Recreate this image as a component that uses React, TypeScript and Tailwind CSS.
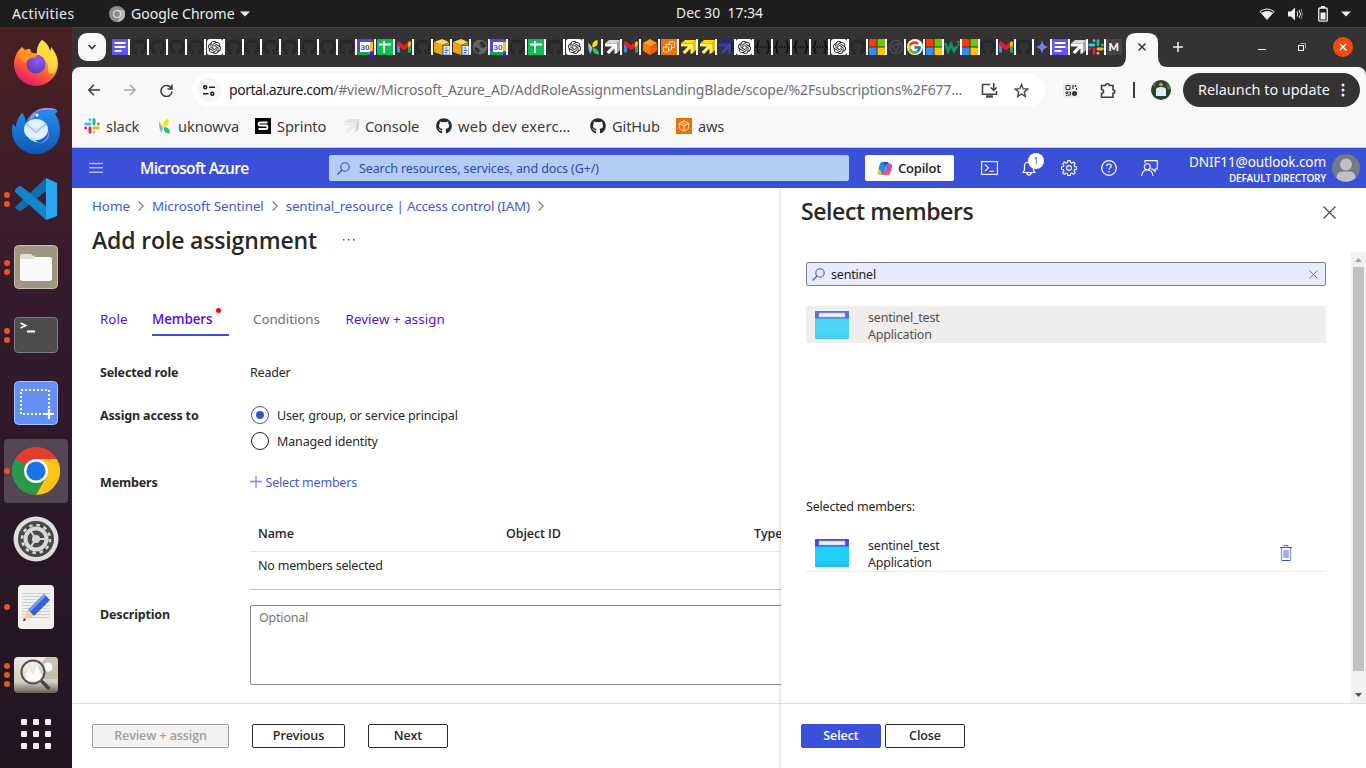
import React from "react";
import { FaGithub } from "react-icons/fa";
import { SiOpenai } from "react-icons/si";
import { FcGoogle } from "react-icons/fc";

const uiFont = "font-['Noto_Sans',sans-serif]";

/* ---------- Favicons ---------- */

const Docs = () => (
  <svg width="16" height="16" viewBox="0 0 16 16">
    <rect width="16" height="16" fill="#6253f5" />
    <path d="M2.5 4h11M2.5 8h11M2.5 12h7" stroke="#fff" strokeWidth="1.8" />
  </svg>
);
const GithubDark = () => <FaGithub size={16} color="#24292f" />;
const OpenAI = () => (
  <span className="flex size-4 items-center justify-center rounded-[3px] bg-white">
    <SiOpenai size={13} color="#111" />
  </span>
);
const Calendar = () => (
  <svg width="17" height="18" viewBox="0 0 17 18" className="mt-[2px] shrink-0">
    <path d="M0 2a2 2 0 0 1 2-2h12a2 2 0 0 1 2 2v2H0z" fill="#4b49e8" />
    <path d="M0 3h3v10H0z" fill="#4b49e8" />
    <path d="M13 3h3v9h-3z" fill="#ffc107" />
    <path d="M0 12.500h13V16H2a2 2 0 0 1-2-2z" fill="#12a84c" />
    <path d="M13 12h3v3h-3z" fill="#4b49e8" />
    <rect x="3" y="3" width="10" height="10" fill="#fff" />
    <text x="8" y="11" textAnchor="middle" fontSize="8" fontWeight="700" fontFamily="Roboto, sans-serif" fill="#3c5fe0">30</text>
    <circle cx="15" cy="16" r="2.200" fill="#4b0fe0" />
  </svg>
);
const Sheets = () => (
  <svg width="16" height="16" viewBox="0 0 16 16">
    <rect width="16" height="16" rx="1" fill="#0bbf57" />
    <path d="M2 5.500h12M7 2v12" stroke="#fff" strokeWidth="1.800" />
  </svg>
);
const Gmail = () => (
  <svg width="16" height="16" viewBox="0 0 16 16">
    <path d="M1 4v8.500a1 1 0 0 0 1 1h2V7z" fill="#4285f4" />
    <path d="M15 4v8.500a1 1 0 0 1-1 1h-2V7z" fill="#34a853" />
    <path d="M1 3.500C1 2.200 2.500 2 3.500 2.800L8 6.200l4.500-3.400C13.500 2 15 2.200 15 3.500L12 8.300 8 11.300l-4-3L1 5.500z" fill="#ea1c24" />
    <path d="M12 4.200V8.300l3-2.300V4c0-1.600-1.600-1.900-2.500-1.200z" fill="#fbbc04" />
  </svg>
);
const YellowBox = () => (
  <svg width="16" height="16" viewBox="0 0 16 16">
    <path d="M0 3 8 0l7 3-7 3z" fill="#ffd766" />
    <path d="M0 3l8 3v10l-8-3z" fill="#f0a30a" />
    <path d="M8 6l7-3v9l-7 4z" fill="#d98a00" />
    <rect x="9" y="6.500" width="7" height="9.500" fill="#fff" stroke="#2766b8" />
    <path d="M10.500 9h3M10.500 11.300h4M10.500 13.600h3" stroke="#2766b8" strokeWidth="1.200" />
  </svg>
);
const Globe = () => (
  <svg width="16" height="16" viewBox="0 0 16 16">
    <circle cx="8" cy="8" r="7.300" fill="#62666b" />
    <path d="M9 2c3 .5 5 3 5 6l-3 1-3-1 1-2-2-1zM2 8l4 1 2 2-1 3c-3 0-5-3-5-6z" fill="#343232" />
  </svg>
);
const Uknowva = () => (
  <svg width="16" height="16" viewBox="0 0 16 16">
    <path d="M7.500 8.500C6.500 4 9 1.500 12.500 1c.8 4.500-1 7-5 7.500z" fill="#f4e400" />
    <path d="M8 9c3 0 6 2 6 6.500-4 0-7-2-6-6.500z" fill="#18c77c" />
    <path d="M3.500 3C4 6 6.500 7 7 9s-1 4-1.500 6C3.500 12 2.500 7 3.500 3z" fill="#8ea2f7" />
    <path d="M4 4.500c2 2.500 4 3.500 3 7-1-3-3-4-3-7z" fill="#f4e400" />
  </svg>
);
const Arrow = ({ light, mid, dark }: { light: string; mid: string; dark: string }) => (
  <svg width="16" height="16" viewBox="0 0 16 16">
    <path d="M5 1h11l-3 3.500H1z" fill={mid} />
    <path d="M16 1v10l-3 3V4.500z" fill={dark} />
    <path d="M1 4.500h12V14l-2.500 1V9.500L5 15l-2.500-2L8 7.500H1z" fill={light} />
  </svg>
);
const Cube = () => (
  <svg width="16" height="16" viewBox="0 0 16 16">
    <path d="M1 4 8 0l7 4-7 4z" fill="#ff9d1c" />
    <path d="M1 4l7 4v8l-7-4z" fill="#ff7a00" />
    <path d="M15 4 8 8v8l7-4z" fill="#e86100" />
  </svg>
);
const AwsTile = () => (
  <svg width="16" height="16" viewBox="0 0 16 16">
    <rect width="16" height="16" fill="#e8780c" />
    <g fill="none" stroke="#ffe5c7">
      <rect x="2.500" y="8" width="5" height="5" rx="1" />
      <path d="M5 8V6.500a1 1 0 0 1 1-1h3.500a1 1 0 0 1 1 1V10a1 1 0 0 1-1 1H7.500M8 5.500V4a1 1 0 0 1 1-1h3.500a1 1 0 0 1 1 1v3.500a1 1 0 0 1-1 1h-2" />
    </g>
  </svg>
);
const Braces = () => (
  <svg width="16" height="16" viewBox="0 0 16 16" fill="none" stroke="#0d0d0d" strokeWidth="1.500">
    <path d="M4.500 2C2.500 2 2.700 3 2.700 5S2.200 8 .5 8c1.700 0 2.200 1 2.200 3s-.2 3 1.800 3M11.500 2c2 0 1.800 1 1.800 3s.5 3 2.200 3c-1.700 0-2.200 1-2.200 3s.2 3-1.800 3" />
    <path d="M4.500 8h7" strokeDasharray="1.500 1.200" />
  </svg>
);
const Windows = () => (
  <svg width="16" height="16" viewBox="0 0 16 16">
    <path d="M0 0h7.500v7.500H0z" fill="#ff3c00" />
    <path d="M8.500 0H16v7.500H8.500z" fill="#66cc00" />
    <path d="M0 8.500h7.500V16H0z" fill="#2e8ff5" />
    <path d="M8.500 8.500H16V16H8.500z" fill="#ffc400" />
  </svg>
);
const ChromeDark = () => (
  <svg width="16" height="16" viewBox="0 0 16 16" fill="none" stroke="#474a4e">
    <circle cx="8" cy="8" r="6.500" strokeWidth="1.600" />
    <circle cx="8" cy="8" r="2.700" strokeWidth="1.500" />
    <path d="M8 5.200h6M5.600 9.300l-3-5M10.400 9.300l-3 5" strokeWidth="1.400" />
  </svg>
);
const Google = () => (
  <span className="flex size-4 items-center justify-center rounded-full bg-white">
    <FcGoogle size={15} />
  </span>
);
const W3 = () => (
  <svg width="16" height="16" viewBox="0 0 16 16" fill="none" stroke="#059862">
    <path d="M1 4l3 8 3-7 3 7 3-5" strokeWidth="2.800" />
    <path d="M12.500 2.500h3l-1.500 2c1.500 0 2 2.500-.5 2.500" strokeWidth="1.100" />
  </svg>
);
const Gemini = () => (
  <svg width="16" height="16" viewBox="0 0 16 16">
    <defs>
      <linearGradient id="gem" x1="0" x2="1">
        <stop offset="0" stopColor="#3f8cf0" />
        <stop offset="1" stopColor="#a27ae0" />
      </linearGradient>
    </defs>
    <path d="M8 1c.7 4.400 2.600 6.300 7 7-4.400.7-6.300 2.600-7 7-.7-4.400-2.600-6.300-7-7 4.400-.7 6.300-2.600 7-7z" fill="url(#gem)" />
  </svg>
);
const Slack = () => (
  <svg width="16" height="16" viewBox="0 0 16 16" strokeWidth="2.900" strokeLinecap="round" fill="none">
    <path d="M6 1.700h.01M1.700 6H6" stroke="#36c5f0" />
    <path d="M10 1.700V6M14.300 6h.01" stroke="#2eb67d" />
    <path d="M10 10h4.300M10 14.300h.01" stroke="#ecb22e" />
    <path d="M6 10v4.300M1.700 10h.01" stroke="#e01e5a" />
  </svg>
);
const Medium = () => (
  <span className="flex size-4 items-center justify-center bg-[#454545] font-['Lato',sans-serif] text-[11px] font-black text-white">M</span>
);

const WhiteArrow = () => <Arrow light="#fafafa" mid="#d8d8d8" dark="#a9a9a9" />;
const YellowArrow = () => <Arrow light="#fff06a" mid="#ffdf00" dark="#e8c500" />;
const NavyArrow = () => <Arrow light="#3a4599" mid="#23277a" dark="#1b1d5e" />;

const wideTabs = [
  Docs, GithubDark, GithubDark, GithubDark, GithubDark, OpenAI, GithubDark, GithubDark, GithubDark, GithubDark,
  GithubDark, GithubDark, GithubDark, Calendar, Sheets, Gmail, GithubDark, YellowBox, YellowBox, Globe, Calendar,
  GithubDark, Sheets, GithubDark, OpenAI, Uknowva, WhiteArrow, Gmail, Cube, AwsTile, YellowArrow, YellowArrow,
  NavyArrow, OpenAI, Braces, Braces, Braces, Braces, OpenAI, GithubDark, Windows, ChromeDark, Google,
];
const narrowTabs = [Windows, W3, Windows, GithubDark, Gmail, GithubDark, Gemini, Docs, WhiteArrow, Slack];

const TabCell = ({ icon: Icon, narrow }: { icon: React.ComponentType; narrow?: boolean }) => (
  <span className={`flex h-4 shrink-0 items-center justify-between ${narrow ? "w-[18px]" : "w-[18.93px] pr-[1px]"}`}>
    <span className="flex size-4 shrink-0 items-center justify-center">
      <Icon />
    </span>
    <span className="h-4 w-[2px] shrink-0 bg-white" />
  </span>
);

/* ---------- Dock ---------- */

const Firefox = () => (
  <svg width="48" height="48" viewBox="0 0 48 48">
    <defs>
      <linearGradient id="ff1" x1=".8" y1="0" x2=".3" y2="1">
        <stop offset="0" stopColor="#fff44f" />
        <stop offset=".35" stopColor="#ffb020" />
        <stop offset=".65" stopColor="#ff5b2e" />
        <stop offset="1" stopColor="#e3127b" />
      </linearGradient>
      <radialGradient id="ff2" cx=".6" cy=".3" r=".8">
        <stop offset="0" stopColor="#9b59ff" />
        <stop offset="1" stopColor="#4a3ba8" />
      </radialGradient>
    </defs>
    <path d="M30 1c5 3 7 7 8 11 1-1 1-2 1-4 4 5 7 10 7 17a22 22 0 0 1-44 0c0-6 2-10 5-14L10 8l3 3c2-1 3-1 5-1l2 5 5-1c0-6 2-10 5-13z" fill="url(#ff1)" />
    <path d="M30 1c5 3 7 7 8 11 1-1 1-2 1-4 6 8 8 17 5 24-3 4-7 3-8 0 1-9-3-10-6-13-3-2-5-2-5-5 0-6 2-10 5-13z" fill="#ffe14a" opacity=".75" />
    <circle cx="24" cy="25" r="9.500" fill="url(#ff2)" />
    <path d="M7 14c4-3 8-3 11-1l7 2c0 4-3 4-6 4-3 2-5 2-5 5-3-1-5-4-7-10z" fill="#ff9420" />
  </svg>
);
const Thunderbird = () => (
  <svg width="48" height="48" viewBox="0 0 48 48">
    <defs>
      <linearGradient id="tb" x1="0" y1="0" x2="0" y2="1">
        <stop offset="0" stopColor="#2490f0" />
        <stop offset="1" stopColor="#0f58b5" />
      </linearGradient>
    </defs>
    <path d="M10 6c3 3 4 7 3 11C16 8 25 1 34 1c5 0 9 1 12 3l-3 3c4 5 5 11 5 17a24 22.500 0 0 1-48 1c0-4 0-6 1-8l3 3c0-5 2-10 6-14z" fill="url(#tb)" />
    <path d="M17 14C19 6 26 1 34 1c4 0 8 0 11 2-11-1-19 1-24 8z" fill="#a98be8" />
    <path d="M24 5q8-4 20-1c-3 2-4 3-6 3-6 0-12 1-16 4z" fill="#2a86e6" />
    <path d="M36 22c2 8-3 12-9 15 8-2 12-7 9-15z" fill="#a08be6" />
    <ellipse cx="24" cy="22.500" rx="12" ry="10.500" fill="#e2f1ff" />
    <path d="M14 16.500l10 9 10-9" fill="none" stroke="#a9c8ea" strokeWidth="2" />
    <path d="M16 30c4 5 8 5 12 6-4-1-6-4-4-5z" fill="#c5e2ff" />
    <circle cx="25" cy="8" r="1.500" fill="#fff" />
  </svg>
);
const VSCode = () => (
  <svg width="48" height="48" viewBox="0 0 48 48">
    <path d="M3 32 34 3v13L9 36c-2 0-5-2-6-4z" fill="#0e6fb3" />
    <path d="M3 15c1-2 4-4 6-4l25 20v14L3 17z" fill="#1484cc" />
    <path d="M34 3l11 5v33l-11 4z" fill="#2aa7f0" />
  </svg>
);
const Files = () => (
  <svg width="48" height="48" viewBox="0 0 48 48">
    <rect x="2.500" y="2.500" width="43" height="43" rx="4" fill="#9f967f" stroke="#c5bfae" />
    <path d="M8 13a2 2 0 0 1 2-2h9l3 3v4H8z" fill="#e3ded0" />
    <rect x="8" y="14" width="32" height="24" rx="2.500" fill="#fafafa" />
    <path d="M8 16a2 2 0 0 1 2-2h10l3-2v4z" fill="#e3ded0" />
  </svg>
);
const Terminal = () => (
  <svg width="48" height="48" viewBox="0 0 48 48">
    <rect x="2.500" y="6.500" width="43" height="35" rx="3.500" fill="#4d4d4d" stroke="#7d7d7d" />
    <path d="M8.500 12l5 2.500-5 2.500M15 20.500h8" fill="none" stroke="#fff" strokeWidth="1.800" />
  </svg>
);
const Screenshot = () => (
  <svg width="48" height="48" viewBox="0 0 48 48">
    <rect x="2.500" y="2.500" width="43" height="43" rx="4" fill="#6490f4" stroke="#a3c0ff" />
    <rect x="9" y="11" width="28" height="24" fill="none" stroke="#fff" strokeWidth="2" strokeDasharray="2 2" />
    <path d="M32 35h10M37 30v10" stroke="#fff" strokeWidth="2.200" />
  </svg>
);
const Chrome = () => (
  <svg width="48" height="48" viewBox="0 0 48 48">
    <path d="M24 24 3.200 12A24 24 0 0 1 44.800 12z" fill="#e33b2e" />
    <path d="M24 24 3.200 12A24 24 0 0 0 24 48L34.400 30z" fill="#2a9a48" />
    <path d="M24 12h20.800A24 24 0 0 1 24 48l10.400-18z" fill="#fcc419" />
    <circle cx="24" cy="24" r="12" fill="#fff" />
    <circle cx="24" cy="24" r="9.500" fill="#1a73e8" />
  </svg>
);
const Settings = () => (
  <svg width="48" height="48" viewBox="0 0 48 48">
    <circle cx="24" cy="24" r="22.500" fill="#dedede" />
    <circle cx="24" cy="24" r="18" fill="#484848" />
    <circle cx="24" cy="24" r="14" fill="none" stroke="#d8d8d8" strokeWidth="2.500" strokeDasharray="3.500 3.830" />
    <circle cx="24" cy="24" r="10.500" fill="none" stroke="#d8d8d8" strokeWidth="4" />
    <circle cx="24" cy="24" r="4" fill="#d8d8d8" />
    <path d="M24 24h10M24 24l-6-9M24 24l-6 9" stroke="#d8d8d8" strokeWidth="2" />
  </svg>
);
const Editor = () => (
  <svg width="48" height="48" viewBox="0 0 48 48">
    <rect x="6" y="2" width="36" height="44" rx="4" fill="#f1f1f1" />
    <path d="M10 10.500h28M10 13.500h28M10 16.500h28M10 19.500h28M10 22.500h28M10 25.500h28M10 28.500h28M10 31.500h28M10 34.500h28" stroke="#cfcfcf" />
    <path d="M32 11l6 6-16 16-6-6z" fill="#2f62d9" />
    <path d="M32 11l2 2-16 16-2-2z" fill="#6d9cf5" />
    <path d="M16 27l6 6-11 5z" fill="#f5cfa0" />
    <path d="M12 35l2 2-3 1.500z" fill="#333" />
  </svg>
);
const ImageViewer = () => (
  <svg width="48" height="48" viewBox="0 0 48 48">
    <defs>
      <linearGradient id="iv" x1="0" y1="0" x2="0" y2="1">
        <stop offset="0" stopColor="#eceae2" />
        <stop offset=".7" stopColor="#cfccc0" />
        <stop offset="1" stopColor="#6a5f58" />
      </linearGradient>
    </defs>
    <rect x="2" y="6" width="44" height="36" rx="4" fill="url(#iv)" />
    <path d="M34 6h8q4 0 4 4v18H18z" fill="#b9b7a0" opacity=".7" />
    <circle cx="36" cy="16" r="4.500" fill="#fff" />
    <path d="M11 30l6-12 4 5 4-8 8 15z" fill="#f8f8f5" />
    <circle cx="21" cy="21" r="11.500" fill="#fff" fillOpacity=".35" stroke="#4f4f4f" strokeWidth="2" />
    <path d="M29.500 30l8 8" stroke="#444" strokeWidth="3.500" />
  </svg>
);

const dock: { icon: React.ComponentType; dots: number; active?: boolean }[] = [
  { icon: Firefox, dots: 0 },
  { icon: Thunderbird, dots: 0 },
  { icon: VSCode, dots: 2 },
  { icon: Files, dots: 2 },
  { icon: Terminal, dots: 2 },
  { icon: Screenshot, dots: 0 },
  { icon: Chrome, dots: 1, active: true },
  { icon: Settings, dots: 0 },
  { icon: Editor, dots: 1 },
  { icon: ImageViewer, dots: 3 },
];

const Dock = () => (
  <aside className="flex w-[72px] shrink-0 flex-col items-center bg-linear-to-b from-[#4a2022] via-[#331a2e] via-40% to-[#211520] pt-[2px]">
    {dock.map(({ icon: Icon, dots, active }, i) => (
      <div key={i} className="flex h-[68px] w-full shrink-0 items-center px-1">
        <div className={`flex h-16 w-16 items-center rounded ${active ? "bg-[#554655]" : ""}`}>
          <div className="flex w-2 shrink-0 flex-col gap-[3px]">
            {Array.from({ length: dots }, (_, d) => (
              <span key={d} className="size-[6px] rounded-full bg-[#e95420]" />
            ))}
          </div>
          <Icon />
        </div>
      </div>
    ))}
    <div className="mt-[10px] grid grid-cols-3 gap-[6px]">
      {Array.from({ length: 9 }, (_, i) => (
        <span key={i} className="size-[6px] rounded-[1px] bg-[#f2f0ee]" />
      ))}
    </div>
  </aside>
);

/* ---------- Shell and browser chrome ---------- */

const TopBar = () => (
  <header className="flex h-[27px] shrink-0 items-center bg-[#1d1d1d] text-[14px] text-[#eeeeee]">
    <span className="w-[109px] pl-3 tracking-[0.42px]">Activities</span>
    <svg width="16" height="16" viewBox="0 0 16 16">
      <circle cx="8" cy="8" r="8" fill="#8c8c8c" />
      <path d="M8 4h7.200A8 8 0 0 1 8 16l3.500-6z" fill="#b8b8b8" />
      <circle cx="8" cy="8" r="4" fill="#e6e6e6" />
      <circle cx="8" cy="8" r="2.900" fill="#8a8a8a" />
    </svg>
    <span className="ml-[6px] w-[109px] tracking-[0.02px]">Google Chrome</span>
    <svg width="10" height="6" viewBox="0 0 10 6"><path d="M0 .5h10L5 5.500z" fill="#eee" /></svg>
    <span className="ml-[426px] w-[200px] whitespace-pre text-[13.800px] tracking-[0.06px]">Dec 30  17:34</span>
    <div className="ml-auto flex items-center pr-[15px]">
      <svg width="16" height="12" viewBox="0 0 16 12">
        <path d="M1 3.500Q8-1.500 15 3.500L8 11.500z" fill="none" stroke="#eee" />
        <path d="M2.500 4.700Q8 1.500 13.500 4.700L8 11.500z" fill="#eee" />
      </svg>
      <svg className="ml-[13px]" width="16" height="14" viewBox="0 0 16 14" fill="none" stroke="#eee">
        <path d="M0 4.500h3L7 .5v13l-4-4H0z" fill="#eee" stroke="none" />
        <path d="M9 4.500q1.500 2.500 0 5M11 3q3 4 0 8" />
        <path d="M13 1.800q3 5.200 0 10.400" stroke="#888" />
      </svg>
      <svg className="ml-[14px]" width="10" height="16" viewBox="0 0 10 16">
        <path d="M3 0h4v2H3z" fill="#eee" />
        <rect x=".75" y="2" width="8.500" height="13.200" rx="1.200" fill="none" stroke="#eee" strokeWidth="1.300" />
        <path d="M2.500 6.500h5v7h-5z" fill="#eee" />
      </svg>
      <svg className="ml-[13px]" width="10" height="6" viewBox="0 0 10 6"><path d="M0 .5h10L5 5.500z" fill="#eee" /></svg>
    </div>
  </header>
);

const TabStrip = () => (
  <div className="flex h-10 shrink-0 items-center border-t border-[#454343] bg-[#343232] pb-px pl-[6px]">
    <span className="mr-[6px] flex size-7 items-center justify-center rounded-[9px] bg-[#f8f8f8]">
      <svg width="10" height="6" viewBox="0 0 10 6"><path d="M1.500 1 5 4.500 8.500 1" fill="none" stroke="#333" strokeWidth="1.600" /></svg>
    </span>
    {wideTabs.map((icon, i) => <TabCell key={i} icon={icon} />)}
    {narrowTabs.map((icon, i) => <TabCell key={i} icon={icon} narrow />)}
    <Medium />
    <svg className="-mb-px ml-[-6px] shrink-0 self-end" width="52" height="34" viewBox="0 0 52 34">
      <path d="M0 34q10 0 10-10V10Q10 0 20 0h12q10 0 10 10v14q0 10 10 10z" fill="#f8f8f8" />
      <path d="M22.500 10.500l7 7m0-7l-7 7" stroke="#333" strokeWidth="1.500" />
    </svg>
    <svg className="ml-[4px] shrink-0" width="12" height="12" viewBox="0 0 12 12"><path d="M6 1v10M1 6h10" stroke="#f0f0f0" strokeWidth="1.500" /></svg>
    <div className="ml-auto flex items-center pr-[13px]">
      <svg width="8" height="8" viewBox="0 0 8 8"><path d="M0 6.500h8" stroke="#fff" /></svg>
      <svg className="ml-8" width="8" height="8" viewBox="0 0 8 8" fill="none" stroke="#fff"><path d="M.5 2.500h5v5h-5z" /><path d="M2.500.5h5v5" stroke="#aaa" /></svg>
      <span className="ml-[27px] flex size-5 items-center justify-center rounded-full bg-[#f04b0a]">
        <svg width="8" height="8" viewBox="0 0 8 8"><path d="M.5.5l7 7m0-7l-7 7" stroke="#fff" strokeWidth="1.400" /></svg>
      </span>
    </div>
  </div>
);

const Toolbar = () => (
  <div className="bg-[#343232]">
    <div className="flex h-[46px] items-center rounded-t-lg bg-[#f8f8f8] pl-4 pr-[6px]">
      <svg width="12" height="12" viewBox="0 0 12 12" fill="none" stroke="#3c3c3c" strokeWidth="1.500"><path d="M12 6H1M6 .8.800 6 6 11.200" /></svg>
      <svg className="ml-6" width="12" height="12" viewBox="0 0 12 12" fill="none" stroke="#a5a5a5" strokeWidth="1.500"><path d="M0 6h11M6 .8 11.200 6 6 11.200" /></svg>
      <svg className="ml-6" width="13" height="13" viewBox="0 0 13 13" fill="none" stroke="#3c3c3c" strokeWidth="1.600"><path d="M11.400 4.500A5.500 5.500 0 1 0 12 7.500M12 .5V5H7.500" /></svg>
      <div className="ml-[19px] flex h-[34px] w-[853px] items-center rounded-full bg-white pl-[5px] pr-[16px]">
        <span className="flex size-6 items-center justify-center rounded-full bg-[#f5f5f5]">
          <svg width="12" height="11" viewBox="0 0 12 11" fill="none" stroke="#222" strokeWidth="1.500"><circle cx="2.200" cy="2.200" r="1.500" /><path d="M6 2.200h6M0 8.800h5.500" /><circle cx="9.300" cy="8.800" r="1.500" /></svg>
        </span>
        <span className="mb-[2px] ml-2 w-[750px] whitespace-nowrap text-[14px] tracking-[-0.135px] text-[#6f7073]">
          <span className="tracking-[-0.47px] text-[#1c1c1c]">portal.azure.com</span>/#view/Microsoft_Azure_AD/AddRoleAssignmentsLandingBlade/scope/%2Fsubscriptions%2F677…
        </span>
        <svg className="ml-auto shrink-0" width="17" height="15" viewBox="0 0 17 15" fill="none" stroke="#444" strokeWidth="1.600"><path d="M9 1.500H1.500v9.700h14V8M12.700 0v7M9.800 4.500l2.900 2.900 2.900-2.900" /><path d="M5 13.500h7" strokeWidth="2.400" /></svg>
        <svg className="ml-4 shrink-0" width="15" height="15" viewBox="0 0 15 15" fill="none" stroke="#444" strokeWidth="1.400"><path d="M7.500 1.500l1.700 4.200 4.500.4-3.400 2.900 1 4.400-3.800-2.400-3.800 2.400 1-4.400L1.300 6.100l4.500-.4z" /></svg>
      </div>
      <svg className="ml-[18px]" width="16" height="15" viewBox="0 0 16 15">
        <rect width="16" height="15" rx="1" fill="#ececec" />
        <path d="M3 2.500h4v4H3zM3 9h2v1.500H3zM6 9h1.500v3H5" fill="none" stroke="#333" />
        <path d="M10 2v4M12.500 2v2M13.500 5v2M3 12.500h1.500" stroke="#333" strokeWidth="1.200" />
        <circle cx="11.500" cy="10.500" r="2.500" fill="#333" />
      </svg>
      <svg className="ml-[21px]" width="17" height="17" viewBox="0 0 17 17" fill="none" stroke="#3c3c3c" strokeWidth="1.600"><path d="M1.500 3.500h4a2 1.700 0 0 1 4 0h3.500v4.200a1.800 1.800 0 0 1 0 3.600v3.900H1.500v-3.700a2 2 0 0 0 0-4z" /></svg>
      <span className="ml-[16px] h-4 w-[2px] bg-[#3c3c3c]" />
      <svg className="ml-4" width="20" height="20" viewBox="0 0 20 20">
        <defs><clipPath id="av"><circle cx="10" cy="10" r="10" /></clipPath></defs>
        <g clipPath="url(#av)"><path d="M0 0h20v20H0z" fill="#26402a" /><path d="M0 3l5-3-1 8zM15 4l5 3-3 3z" fill="#55764f" /><path d="M5 16V9.500Q5 7 10 7t5 2.500V16z" fill="#dfeaf5" /><circle cx="10" cy="4.500" r="2" fill="#b58a70" /></g>
      </svg>
      <span className="ml-3 flex h-[34px] w-[177px] items-center justify-between rounded-full bg-[#343232] pl-[15px] pr-[15px] text-[14.400px] text-[#f5f5f5]">
        Relaunch to update
        <svg width="4" height="14" viewBox="0 0 4 14" fill="#f5f5f5"><circle cx="2" cy="2" r="1.500" /><circle cx="2" cy="7" r="1.500" /><circle cx="2" cy="12" r="1.500" /></svg>
      </span>
    </div>
  </div>
);

const Sprinto = () => (
  <svg width="16" height="16" viewBox="0 0 16 16"><rect width="16" height="16" /><path d="M12.500 4.500H5q-1.500 0-1.500 1.500T5 7.500h6q1.500 0 1.500 1.800T11 11H3.500" fill="none" stroke="#fff" strokeWidth="1.800" /></svg>
);
const AwsCube = () => (
  <svg width="16" height="16" viewBox="0 0 16 16"><rect width="16" height="16" fill="#ed7100" /><path d="M8 2.800l4.700 2.500v5.200L8 13.200l-4.700-2.700V5.300zM3.500 5.500 8 8l4.500-2.500M8 8v5M5.500 4.200 10 6.700" fill="none" stroke="#ffe9d0" /></svg>
);
const ConsoleArrow = () => <Arrow light="#ededed" mid="#e2e2e2" dark="#d2d2d2" />;
const GithubMark = () => <FaGithub size={16} color="#24292f" />;

const bookmarks: { icon: React.ComponentType; label: string; w: string }[] = [
  { icon: Slack, label: "slack", w: "w-[72px] tracking-[-0.1px]" },
  { icon: Uknowva, label: "uknowva", w: "w-[99px] tracking-[-0.05px]" },
  { icon: Sprinto, label: "Sprinto", w: "w-[88px] tracking-[-0.1px]" },
  { icon: ConsoleArrow, label: "Console", w: "w-[93px] tracking-[-0.1px]" },
  { icon: GithubMark, label: "web dev exerc…", w: "w-[154px] tracking-[0.3px]" },
  { icon: GithubMark, label: "GitHub", w: "w-[86px] tracking-[-0.1px]" },
  { icon: AwsCube, label: "aws", w: "w-[60px] tracking-[-0.2px]" },
];

const Bookmarks = () => (
  <div className="flex h-[35px] shrink-0 items-center border-b border-[#c8c8c8] bg-[#f8f8f8] pb-[7px] pl-3 text-[14.600px] text-[#3a3a3a]">
    {bookmarks.map(({ icon: Icon, label, w }) => (
      <span key={label} className={`flex shrink-0 items-center gap-[6px] whitespace-nowrap ${w}`}>
        <Icon />
        {label}
      </span>
    ))}
  </div>
);

/* ---------- Azure portal ---------- */

const SearchIcon = ({ color }: { color: string }) => (
  <svg width="13" height="13" viewBox="0 0 13 13" fill="none" stroke={color} strokeWidth="1.100"><circle cx="8" cy="5" r="4.200" /><path d="M5 8 .500 12.500" /></svg>
);

const AzureHeader = () => (
  <div className="flex h-10 shrink-0 items-center bg-[#3b50d8] pl-[17px] text-white">
    <svg width="14" height="12" viewBox="0 0 14 12"><path d="M0 1.500h14M0 5.800h14M0 10.200h14" stroke="#aeb8ef" strokeWidth="1.500" /></svg>
    <span className="ml-[37px] w-[189px] whitespace-nowrap pt-[2px] font-['Open_Sans',sans-serif] text-[15.500px] font-semibold tracking-[-0.65px]">Microsoft Azure</span>
    <div className="flex h-[26px] w-[520px] items-center gap-[9px] rounded-[2px] bg-[#b4cdf3] pl-2 text-[12.500px] tracking-[-0.11px] text-[#2f4aa8]">
      <SearchIcon color="#3348b8" />
      <span className="pt-[2px]">Search resources, services, and docs (G+/)</span>
    </div>
    <div className="ml-4 flex h-[26px] w-[89px] items-center gap-[5px] rounded-[2px] bg-white pl-3 font-['Open_Sans',sans-serif] text-[13px] font-semibold tracking-[-0.2px] text-[#242424]">
      <svg width="16" height="15" viewBox="0 0 16 15">
        <path d="M5 1h5q1.500 0 2 1.500l1 2.500H9L7 12q-.6 2-2 2H3.500Q0 14 1 10l1.500-6Q3.200 1 5 1z" fill="#1f8fe0" />
        <path d="M1 8l2.500 1L5 14H3.500Q0 14 1 10z" fill="#f5c430" />
        <path d="M11 14H5q1.500-.5 2-2L9 6l1-2q.5-1.500 2-1.500h.5Q16 2.500 15 6l-1.500 5Q12.800 14 11 14z" fill="#c64fc0" />
        <path d="M5 1h5q1.500 0 2 1.500h-1q-1.500 0-2 1.500L8 6 7 3Q6.500 1 5 1z" fill="#1b4fc0" />
        <path d="M5 14q1.500-.5 2-2l.8-2.500 5.700 1.500q-.7 3-2.500 3z" fill="#f1605a" />
      </svg>
      <span className="pt-px">Copilot</span>
    </div>
    <svg className="ml-[27px]" width="17" height="14" viewBox="0 0 17 14" fill="none" stroke="#fff" strokeWidth="1.100"><rect x=".6" y=".6" width="15.800" height="12.800" /><path d="M4 3.500 7.500 6.800 4 10M8.500 10.200h4.500" /></svg>
    <div className="relative ml-6">
      <svg width="14" height="16" viewBox="0 0 14 16" fill="none" stroke="#fff" strokeWidth="1.200"><path d="M1 12.500h12L11.500 10V6q0-4-4.500-4T2.500 6v4zM5 13a2 2 0 0 0 4 0" /></svg>
      <span className="absolute -top-[7px] left-[6px] flex size-4 items-center justify-center rounded-full bg-white text-[9px] text-[#3b50d8]">1</span>
    </div>
    <svg className="ml-[25px]" width="16" height="16" viewBox="0 0 16 16" fill="none" stroke="#fff" strokeWidth="1.100">
      <path d="M6.800.6h2.400l.4 2 1.300.5 1.700-1.100 1.500 1.600-1 1.700.5 1.300 1.900.4v2.200l-1.900.4-.5 1.300 1 1.700-1.600 1.600-1.700-1.100-1.200.5-.4 1.900H6.800l-.4-1.900-1.300-.5-1.700 1.100-1.600-1.600 1.100-1.700-.5-1.300-1.900-.4V7l1.900-.4.5-1.300-1.100-1.700L3.400 2l1.700 1.100 1.300-.5z" />
      <circle cx="8" cy="8" r="2.400" />
    </svg>
    <svg className="ml-6" width="16" height="16" viewBox="0 0 16 16" fill="none" stroke="#fff" strokeWidth="1.200"><circle cx="8" cy="8" r="7.300" /><path d="M5.700 6.300q0-2.300 2.300-2.300t2.300 2q0 1.200-1.200 1.800T8 9.800M8 11v1.500" /></svg>
    <svg className="ml-6" width="17" height="16" viewBox="0 0 17 16" fill="none" stroke="#fff" strokeWidth="1.100"><path d="M4 3V.6h12.300V9h-2.300v2.500L11.500 9H10" /><circle cx="6.300" cy="6.700" r="3" /><path d="M.6 16q.6-6 5.700-6t5.700 6" /></svg>
    <div className="ml-auto flex flex-col items-end whitespace-nowrap pt-[3px] text-right">
      <span className="text-[13.600px] leading-[16px] tracking-[-0.14px]">DNIF11@outlook.com</span>
      <span className="pt-px font-['Open_Sans',sans-serif] text-[10px] font-semibold leading-[15px] tracking-[-0.2px]">DEFAULT DIRECTORY</span>
    </div>
    <svg className="ml-[6px] mr-[6px]" width="28" height="28" viewBox="0 0 28 28">
      <circle cx="14" cy="14" r="14" fill="#747a86" />
      <circle cx="14" cy="10.500" r="6" fill="#bfc1c6" />
      <path d="M4.500 24q0-6.500 6-6.500h7q6 0 6 6.500a14 14 0 0 1-19 0z" fill="#bfc1c6" />
    </svg>
  </div>
);

const Chevron = () => (
  <svg className="mx-2" width="6" height="10" viewBox="0 0 6 10"><path d="M.7.5 5.200 5 .7 9.500" fill="none" stroke="#777" strokeWidth="1.100" /></svg>
);

const Button = ({ children, className }: { children: React.ReactNode; className: string }) => (
  <button className={`h-6 rounded-[2px] border font-['Open_Sans',sans-serif] text-[12.500px] font-semibold leading-[20px] tracking-[-0.1px] ${className}`}>{children}</button>
);

const Label = ({ children }: { children: React.ReactNode }) => (
  <span className="w-[150px] shrink-0 font-bold tracking-[-0.16px]">{children}</span>
);

const RoleAssignment = () => (
  <main className="flex w-[709px] shrink-0 flex-col overflow-hidden bg-white text-[12.500px] tracking-[-0.2px] text-[#292827]">
    <nav className="flex h-9 shrink-0 items-center pl-5 text-[13.400px] tracking-[-0.18px] text-[#4458d8]">
      <span className="tracking-[-0.05px]">Home</span>
      <Chevron />
      <span className="tracking-[-0.1px]">Microsoft Sentinel</span>
      <Chevron />
      <span>sentinal_resource | Access control (IAM)</span>
      <Chevron />
    </nav>
    <div className="flex h-8 shrink-0 items-center pl-5">
      <h1 className="w-[251px] whitespace-nowrap font-['Open_Sans',sans-serif] text-[23px] font-semibold tracking-[-0.15px] text-[#292827]">Add role assignment</h1>
      <svg width="12" height="2" viewBox="0 0 12 2" fill="#555"><path d="M0 0h1.500v1.500H0zM5 0h1.500v1.500H5zM10 0h1.500v1.500H10z" /></svg>
    </div>
    <div className="mt-12 flex h-8 shrink-0 pl-7 text-[13.400px] leading-[30px] tracking-[0px] text-[#5a10dc]">
      <span className="w-[52px]">Role</span>
      <span className="flex w-[77px] border-b-2 border-[#3b50d8] font-['Open_Sans',sans-serif] font-semibold tracking-[-0.12px]">
        <span className="w-[64px]">Members</span>
        <span className="mt-[4px] size-[5px] rounded-full bg-[#f00]" />
      </span>
      <span className="ml-6 w-[92.500px] tracking-[-0.08px] text-[#707070]">Conditions</span>
      <span className="tracking-[0.05px]">Review + assign</span>
    </div>
    <div className="mt-[26px] flex h-5 shrink-0 items-center pl-7 pt-[2px]"><Label>Selected role</Label>Reader</div>
    <div className="mt-[23px] flex shrink-0 pl-7 leading-5">
      <div className="pt-px"><Label>Assign access to</Label></div>
      <div className="ml-auto flex w-[530px] flex-col gap-[6px]">
        <span className="flex h-5 items-center gap-2 tracking-[-0.13px]">
          <span className="flex size-[18px] items-center justify-center rounded-full border border-[#3b50d8]"><span className="size-2 rounded-full bg-[#3b50d8]" /></span>
          <span className="pt-[2px]">User, group, or service principal</span>
        </span>
        <span className="flex h-5 items-center gap-2 tracking-[-0.14px]">
          <span className="size-[18px] rounded-full border border-[#292827]" />
          <span className="pt-[2px]">Managed identity</span>
        </span>
      </div>
    </div>
    <div className="mt-[21px] flex h-5 shrink-0 items-center pl-7 pt-[2px]">
      <Label>Members</Label>
      <span className="flex items-center gap-[3.500px] text-[#4458d8]">
        <svg className="mb-[2px]" width="12" height="12" viewBox="0 0 12 12"><path d="M6 0v12M0 5.500h12" stroke="#a07ae8" strokeWidth="1.300" /></svg>
        Select members
      </span>
    </div>
    <div className="ml-[178px] mt-[23px] h-[75px] w-[560px] shrink-0 border-b border-[#bfbfbf]">
      <div className="flex h-[37px] items-center border-b border-[#e8e8e8] pl-2 pt-[2px] font-['Open_Sans',sans-serif] font-semibold tracking-[-0.1px]">
        <span className="w-[248px]">Name</span>
        <span className="w-[248px]">Object ID</span>
        <span>Type</span>
      </div>
      <div className="flex h-[27px] items-center pl-2 pt-[2px]">No members selected</div>
    </div>
    <div className="mt-[15px] flex shrink-0 pl-7 leading-5">
      <Label>Description</Label>
      <div className="h-20 w-[560px] shrink-0 rounded-[2px] border border-[#8a8886] px-2 pt-[2px] text-[#767676]">Optional</div>
    </div>
    <div className="mt-auto flex h-[65px] shrink-0 border-t border-[#dcdcdc] pl-5 pt-5">
      <Button className="w-[137px] border-[#a19f9d] bg-[#f3f2f1] text-[#a19f9d]">Review + assign</Button>
      <Button className="ml-[23px] w-[93px] border-[#292827] text-[#292827]">Previous</Button>
      <Button className="ml-[23px] w-20 border-[#292827] text-[#292827]">Next</Button>
    </div>
  </main>
);

const AppIcon = ({ id }: { id: string }) => (
  <svg width="34" height="28" viewBox="0 0 34 28">
    <defs><linearGradient id={id} x1="0" y1="0" x2="0" y2="1"><stop offset=".75" stopColor="#1fd0f9" /><stop offset="1" stopColor="#22bfe8" /></linearGradient></defs>
    <rect width="34" height="28" rx="1" fill={`url(#${id})`} />
    <path d="M0 1q0-1 1-1h32q1 0 1 1v6.500H0z" fill="#3b50d8" />
    <path d="M4 2h26v4H4z" fill="#f3f2f8" stroke="#a9b2ee" strokeWidth=".6" />
  </svg>
);

const MemberText = () => (
  <span className="ml-[19px] flex flex-col pt-[2px] leading-[17px]">
    <span>sentinel_test</span>
    <span>Application</span>
  </span>
);

const SelectMembers = () => (
  <section className="z-10 flex flex-1 flex-col bg-white text-[12.500px] tracking-[-0.2px] text-[#292827] shadow-[-1px_0_2px_rgba(0,0,0,0.15)]">
    <div className="flex h-16 shrink-0 items-start justify-between pl-5 pr-[30px] pt-[7px]">
      <h2 className="whitespace-nowrap font-['Open_Sans',sans-serif] text-[23px] font-semibold leading-8 tracking-[-0.4px]">Select members</h2>
      <svg className="mt-[11px]" width="13" height="13" viewBox="0 0 13 13"><path d="M.5.5l12 12m0-12l-12 12" stroke="#444" strokeWidth="1.100" /></svg>
    </div>
    <div className="flex h-[451px] shrink-0">
      <div className="w-[570px] pl-[25px] pt-[10px]">
        <div className="flex h-6 w-[520px] items-center rounded-[2px] border border-[#7e7d85] bg-[#e8ebff] pl-[5px] pr-[7px] text-[#202020]">
          <SearchIcon color="#4458d8" />
          <span className="ml-[6px] flex-1 pt-[2px]">sentinel</span>
          <svg width="9" height="9" viewBox="0 0 9 9"><path d="M.5.5l8 8m0-8l-8 8" stroke="#777985" /></svg>
        </div>
        <div className="mt-5 h-[37px] w-[520px] bg-[#efeeec]">
          <div className="flex h-full items-center pl-[9px] opacity-80"><AppIcon id="app-a" /><MemberText /></div>
        </div>
        <p className="mt-[154px] leading-5">Selected members:</p>
        <div className="mt-[17px] flex h-[38px] w-[520px] items-center border-b border-[#eeeeee] pl-[9px]">
          <AppIcon id="app-b" />
          <MemberText />
          <svg className="ml-auto mr-[34px]" width="12" height="16" viewBox="0 0 12 16" fill="none"><path d="M4 1.500V.6h4v.9" stroke="#4458d8" /><path d="M0 2.500h12M1.500 15.500h9" stroke="#3b50d8" strokeWidth="1.200" /><path d="M1.500 3v12M10.500 3v12" stroke="#8d98e8" strokeWidth="1.400" /><path d="M3.200 5h5.600v8H3.200z" fill="#a3adf0" /></svg>
        </div>
      </div>
      <div className="flex w-[15px] flex-col items-center bg-[#f1f1f1]">
        <svg className="my-[6px]" width="7" height="4" viewBox="0 0 7 4"><path d="M3.500 0 7 4H0z" fill="#a3a3a3" /></svg>
        <span className="-mt-[1px] h-[404px] w-[11px] bg-[#c1c1c1]" />
        <svg className="mt-auto mb-[6px]" width="7" height="4" viewBox="0 0 7 4"><path d="M3.500 4 7 0H0z" fill="#505050" /></svg>
      </div>
    </div>
    <div className="flex flex-1 gap-1 border-t border-[#dcdcdc] pl-5 pt-5">
      <Button className="w-20 border-[#3b50d8] bg-[#3b50d8] text-white">Select</Button>
      <Button className="w-20 border-[#292827] text-[#292827]">Close</Button>
    </div>
  </section>
);

export default function App() {
  return (
    <div className={`flex h-[768px] w-[1366px] flex-col overflow-hidden ${uiFont}`}>
      <TopBar />
      <div className="flex min-h-0 flex-1">
        <Dock />
        <div className="flex min-w-0 flex-1 flex-col">
          <TabStrip />
          <Toolbar />
          <Bookmarks />
          <AzureHeader />
          <div className="flex min-h-0 flex-1">
            <RoleAssignment />
            <SelectMembers />
          </div>
        </div>
      </div>
    </div>
  );
}
